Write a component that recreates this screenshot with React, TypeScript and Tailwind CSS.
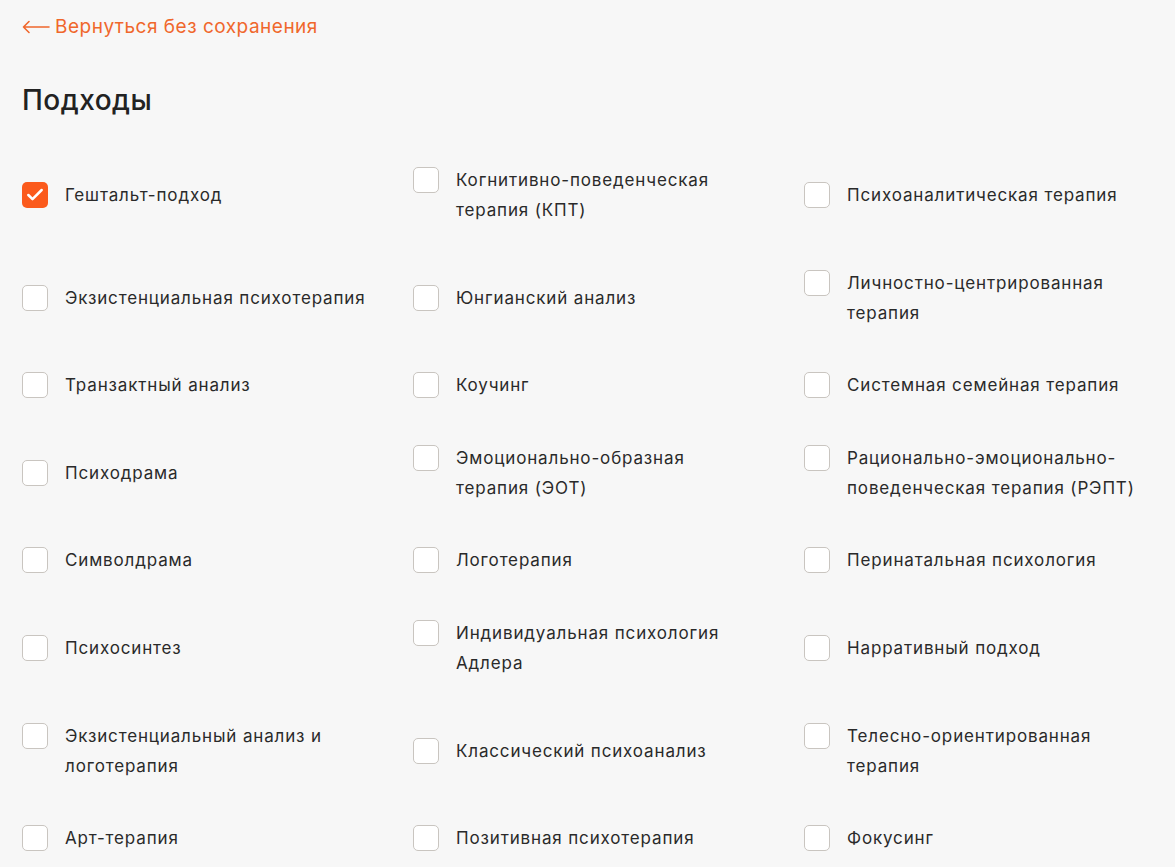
import { Check } from 'lucide-react'

const items: { label: string; checked?: boolean }[] = [
  { label: 'Гештальт-подход', checked: true },
  { label: 'Когнитивно-поведенческая терапия (КПТ)' },
  { label: 'Психоаналитическая терапия' },
  { label: 'Экзистенциальная психотерапия' },
  { label: 'Юнгианский анализ' },
  { label: 'Личностно-центрированная терапия' },
  { label: 'Транзактный анализ' },
  { label: 'Коучинг' },
  { label: 'Системная семейная терапия' },
  { label: 'Психодрама' },
  { label: 'Эмоционально-образная терапия (ЭОТ)' },
  { label: 'Рационально-эмоционально-поведенческая терапия (РЭПТ)' },
  { label: 'Символдрама' },
  { label: 'Логотерапия' },
  { label: 'Перинатальная психология' },
  { label: 'Психосинтез' },
  { label: 'Индивидуальная психология Адлера' },
  { label: 'Нарративный подход' },
  { label: 'Экзистенциальный анализ и логотерапия' },
  { label: 'Классический психоанализ' },
  { label: 'Телесно-ориентированная терапия' },
  { label: 'Арт-терапия' },
  { label: 'Позитивная психотерапия' },
  { label: 'Фокусинг' },
]

function Item({ label, checked }: { label: string; checked?: boolean }) {
  return (
    <label className="flex items-start gap-[17px] cursor-pointer">
      {checked ? (
        <span className="mt-[2px] flex h-[26px] w-[26px] shrink-0 items-center justify-center rounded-[5px] bg-[#fb5a1c]">
          <Check size={20} strokeWidth={3} color="#fff" />
        </span>
      ) : (
        <span className="mt-[2px] h-[26px] w-[26px] shrink-0 rounded-[5px] border border-[#c9c5c0] bg-white" />
      )}
      <span className="max-w-[304px] text-[17px] leading-[30px] tracking-[0.85px] text-[#2a2a2a]">{label}</span>
    </label>
  )
}

export default function App() {
  return (
    <div className="min-h-[867px] bg-[#f7f7f7] px-[22px] pt-[12px] font-['Inter','Noto_Sans',sans-serif]">
      <a className="flex items-center gap-[5px] text-[19px] leading-[30px] tracking-[0.5px] text-[#f0672c]">
        <svg width="28" height="14" viewBox="0 0 28 14" fill="none" stroke="#f0672c" strokeWidth="1.6" strokeLinecap="round" strokeLinejoin="round">
          <path d="M27 7H1.5M7 1.5L1.5 7L7 12.5" />
        </svg>
        <span>Вернуться без сохранения</span>
      </a>
      <h1 className="mt-[41px] text-[28px] font-medium leading-[34px] tracking-[0.5px] text-[#222]">Подходы</h1>
      <div className="mt-[48px] grid grid-cols-[391px_391px_1fr] items-center gap-y-[42.6px]">
        {items.map((it) => (
          <Item key={it.label} label={it.label} checked={it.checked} />
        ))}
      </div>
    </div>
  )
}
